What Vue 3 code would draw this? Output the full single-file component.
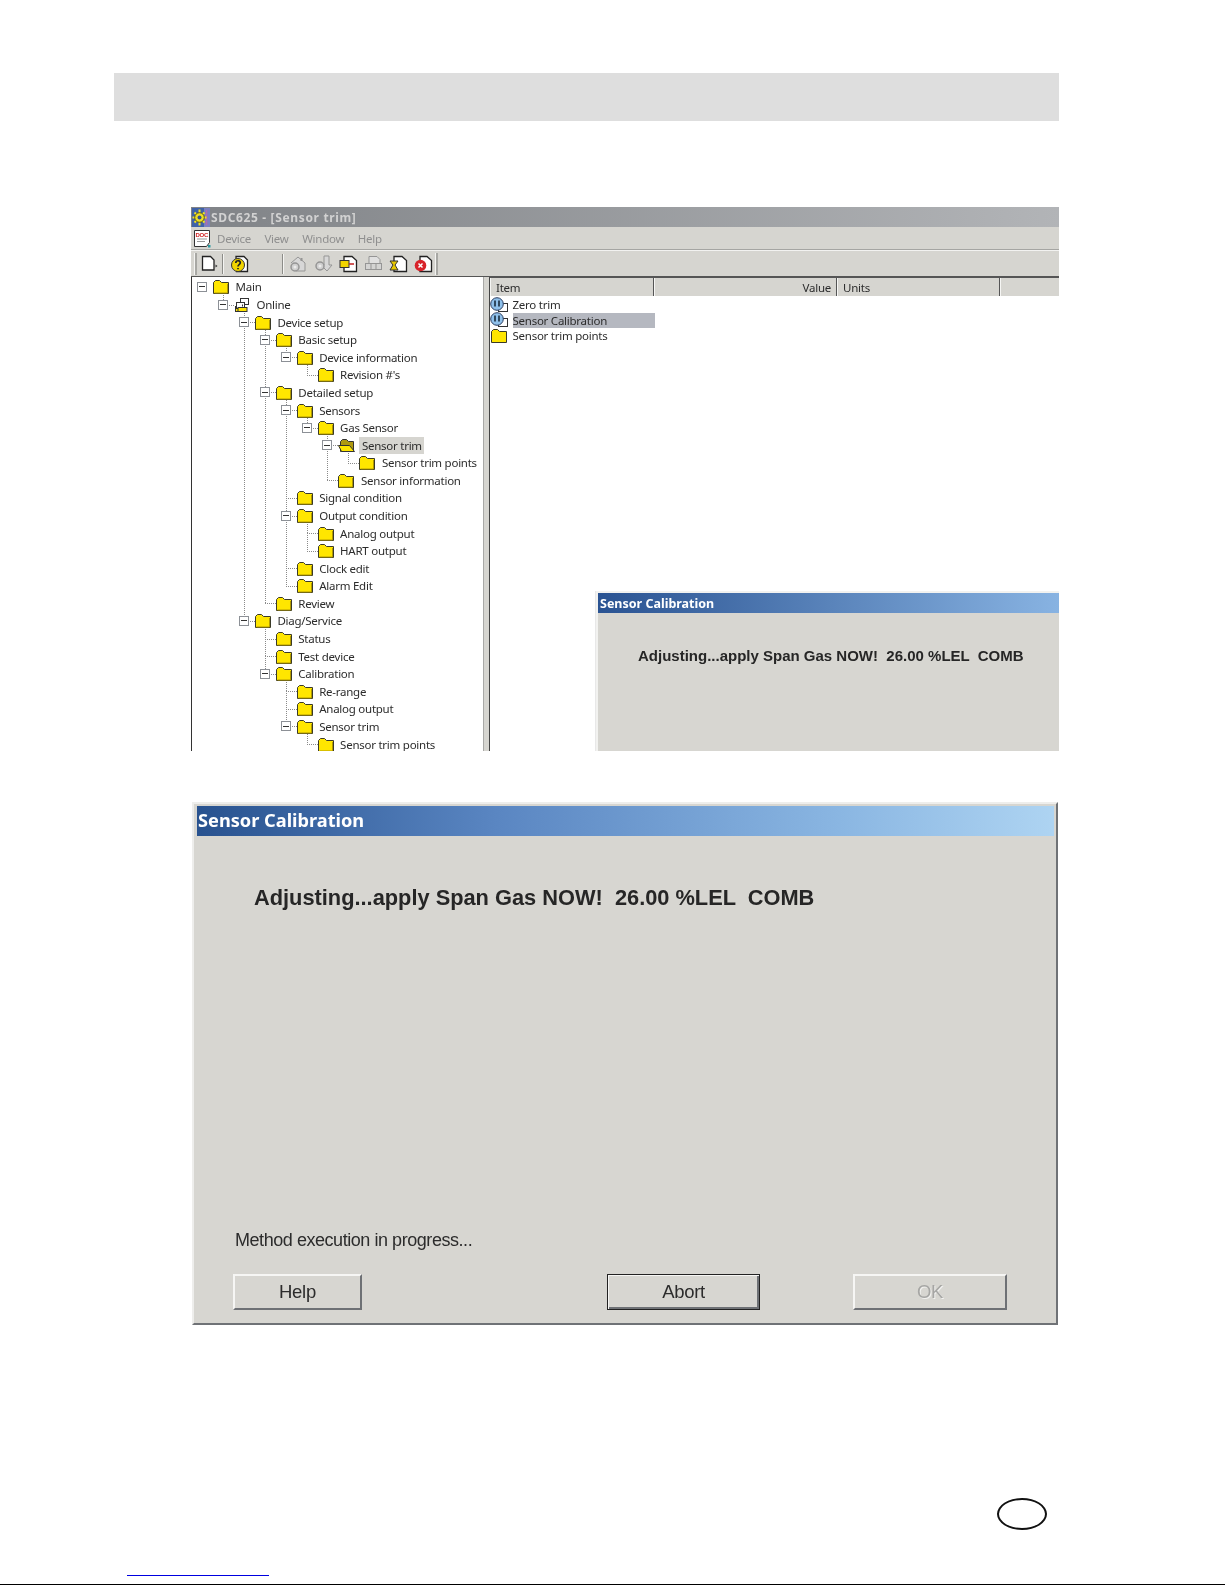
<script setup>
const treeSpec = [
  [0, 'Main', 1], [1, 'Online', 1, 'net'], [2, 'Device setup', 1], [3, 'Basic setup', 1], [4, 'Device information', 1],
  [5, "Revision #'s", 0], [3, 'Detailed setup', 1], [4, 'Sensors', 1], [5, 'Gas Sensor', 1],
  [6, 'Sensor trim', 1, 'open'], [7, 'Sensor trim points', 0], [6, 'Sensor information', 0], [4, 'Signal condition', 0],
  [4, 'Output condition', 1], [5, 'Analog output', 0], [5, 'HART output', 0], [4, 'Clock edit', 0], [4, 'Alarm Edit', 0],
  [3, 'Review', 0], [2, 'Diag/Service', 1], [3, 'Status', 0], [3, 'Test device', 0], [3, 'Calibration', 1],
  [4, 'Re-range', 0], [4, 'Analog output', 0], [4, 'Sensor trim', 1], [5, 'Sensor trim points', 0]
]
const INDENT = 20.9
const ROW = 17.58
const rows = treeSpec.map(([level, label, exp, kind], i) => ({ level, label, exp: !!exp, kind: kind || 'folder', i, pad: 5 + INDENT * level }))
const cy = (i) => Math.round(10 + ROW * i)
const cx = (l) => Math.round(10 + INDENT * l)
const lines = []
rows.forEach((r) => {
  if (r.level === 0) return
  let p = r.i - 1
  while (rows[p].level >= r.level) p--
  let start = p
  for (let q = r.i - 1; q > p; q--) {
    if (rows[q].level === r.level) { start = q; break }
  }
  lines.push({ x1: cx(r.level) + 0.5, y1: cy(start), x2: cx(r.level) + 0.5, y2: cy(r.i) })
  lines.push({ x1: cx(r.level), y1: cy(r.i) + 0.5, x2: cx(r.level) + 12, y2: cy(r.i) + 0.5 })
})
const listRows = [
  { label: 'Zero trim', icon: 'method' },
  { label: 'Sensor Calibration', icon: 'method', sel: true },
  { label: 'Sensor trim points', icon: 'folder' }
]
const menus = ['Device', 'View', 'Window', 'Help']
const message = 'Adjusting...apply Span Gas NOW!  26.00 %LEL  COMB'
</script>

<template>
  <div class="page">
    <div class="band"></div>

    <section class="app">
      <div class="titlebar">
        <svg class="appicon" width="18" height="19" viewBox="0 0 18 19">
          <rect width="18" height="19" fill="#3f62a8" />
          <rect x="12" width="6" height="19" fill="#7a7fc0" />
          <path d="M14.500 2v15" stroke="#b06ab0" stroke-width="1.500" />
          <path d="M7.500 1.500v16M.500 9.500h14M2.500 4.500l10 10M12.500 4.500l-10 10" stroke="#efe022" stroke-width="2" />
          <circle cx="7.500" cy="9.500" r="4.800" fill="#efe022" stroke="#55541c" />
          <circle cx="7.500" cy="9.500" r="2" fill="#34508e" />
        </svg>
        <span>SDC625 - [Sensor trim]</span>
      </div>
      <div class="menubar">
        <svg class="docicon" width="18" height="19" viewBox="0 0 18 19">
          <path d="M1.500 1.500h15v12l-3 4h-12z" fill="#fff" stroke="#333" />
          <text x="2.500" y="7.500" font-size="6" font-weight="700" fill="#d02020" font-family="Liberation Sans, sans-serif">DOC</text>
          <path d="M4 10h10M4 12.500h8" stroke="#999" />
          <rect x="15" y="16" width="2.500" height="2.500" fill="#2a9aa0" />
        </svg>
        <span v-for="m in menus" :key="m" class="menu">{{ m }}</span>
      </div>
      <div class="toolbar">
        <div class="tools">
          <i class="grip"></i>
          <svg width="17" height="17" viewBox="0 0 17 17" class="t1">
            <path d="M1.500 1.500h8l3.500 3.500v10h-11.500z" fill="#fff" stroke="#222" stroke-width="1.300" />
            <path d="M14.500 9.500l2 1.500-2 1.500z" fill="#333" />
          </svg>
          <i class="sep s1"></i>
          <svg width="20" height="19" viewBox="0 0 20 19" class="t2">
            <path d="M6 2.500h8l3.500 3.500v11.500h-11z" fill="#fff" stroke="#222" stroke-width="1.300" />
            <circle cx="8" cy="11" r="6.500" fill="#f2d500" stroke="#333" />
            <path d="M5.800 9c0-3 4.500-3 4.500-.2 0 1.800-2.300 1.800-2.300 3.600M8 14v1.200" fill="none" stroke="#222" stroke-width="1.700" />
          </svg>
          <i class="sep s2"></i>
          <svg width="19" height="18" viewBox="0 0 19 18" class="dis first">
            <path d="M2 8l7-6 7 6v8H7" fill="#d8d8d8" stroke="#8f8f8f" />
            <path d="M12.500 3v3" stroke="#8f8f8f" stroke-width="2" />
            <circle cx="6" cy="12" r="4" fill="#cfcfcf" stroke="#8f8f8f" stroke-width="1.500" />
            <circle cx="6" cy="12" r="1.500" fill="#eee" />
          </svg>
          <svg width="19" height="18" viewBox="0 0 19 18" class="dis">
            <path d="M10 1v9h-3l6 6 5-6h-3V1z" fill="#d8d8d8" stroke="#8f8f8f" />
            <circle cx="6" cy="11" r="4" fill="#cfcfcf" stroke="#8f8f8f" stroke-width="1.500" />
            <circle cx="6" cy="11" r="1.500" fill="#eee" />
          </svg>
          <svg width="19" height="18" viewBox="0 0 19 18">
            <path d="M5 1.500h8l4.500 4v11h-12.500z" fill="#fff" stroke="#222" stroke-width="1.300" />
            <rect x="1" y="5.500" width="9" height="7" fill="#f2d500" stroke="#333" />
            <path d="M10 9h5" stroke="#c02020" stroke-width="1.500" />
          </svg>
          <svg width="19" height="18" viewBox="0 0 19 18" class="dis">
            <path d="M5 1.500h8l3 3v6h-11z" fill="#e2e2e2" stroke="#8f8f8f" />
            <rect x="1.500" y="8.500" width="16" height="6" fill="#d4d4d4" stroke="#8f8f8f" />
            <path d="M7 8.500v6M12 8.500v6" stroke="#8f8f8f" />
          </svg>
          <svg width="19" height="18" viewBox="0 0 19 18">
            <path d="M5 1.500h8l4.500 4v11h-12.500z" fill="#fff" stroke="#222" stroke-width="1.300" />
            <path d="M1 6h8l-3 4 3 5H1l3-5z" fill="#e8c800" stroke="#333" />
          </svg>
          <svg width="19" height="18" viewBox="0 0 19 18">
            <path d="M6 1.500h7l4.500 4v11h-11.500z" fill="#fff" stroke="#222" stroke-width="1.300" />
            <circle cx="6.500" cy="10.500" r="5.800" fill="#d8232a" />
            <path d="M4.500 8.500l4 4M8.500 8.500l-4 4" stroke="#fff" stroke-width="1.500" />
          </svg>
          <i class="grip end"></i>
        </div>
      </div>

      <div class="panes">
        <div class="tree">
          <svg class="links" width="291" height="480">
            <line v-for="(l, k) in lines" :key="k" :x1="l.x1" :y1="l.y1" :x2="l.x2" :y2="l.y2" stroke="#8a8a8a" stroke-dasharray="1 1" />
          </svg>
          <div v-for="r in rows" :key="r.i" class="row" :style="{ paddingLeft: r.pad + 'px' }">
            <span class="box" :class="{ hidden: !r.exp }"><i></i></span>
            <svg v-if="r.kind === 'folder'" class="ficon" width="16" height="15" viewBox="0 0 16 15">
              <path d="M.500 3.500l2-2h4l2 2h7v11H.500z" fill="#ffe600" stroke="#3a3a28" />
              <path d="M14.500 5v9h-13" fill="none" stroke="#b29a00" />
            </svg>
            <svg v-else-if="r.kind === 'open'" class="ficon" width="17" height="15" viewBox="0 0 17 15">
              <path d="M2.500 3.500l2-2h4l2 2h5v10H2.500z" fill="#b09a10" stroke="#333" />
              <path d="M.500 7.500h11l5 6H3.500z" fill="#ffe600" stroke="#333" />
            </svg>
            <svg v-else class="ficon" width="16" height="16" viewBox="0 0 16 16">
              <rect x="6.500" y="1.500" width="8" height="6" fill="#fff" stroke="#333" />
              <rect x="1.500" y="9.500" width="9" height="5" fill="#ffe600" stroke="#333" />
              <rect x="2.500" y="5.500" width="8" height="6" fill="#fff" stroke="#333" />
              <rect x="4" y="10.500" width="9" height="4" fill="#ffe600" stroke="#333" />
              <path d="M8.500 7.500v2" stroke="#333" />
            </svg>
            <span class="label" :class="{ active: r.kind === 'open' }">{{ r.label }}</span>
          </div>
        </div>

        <div class="list">
          <div class="head">
            <div class="col c-item">Item</div>
            <div class="col c-value">Value</div>
            <div class="col c-units">Units</div>
            <div class="col c-rest"></div>
          </div>
          <div v-for="x in listRows" :key="x.label" class="lrow">
            <svg v-if="x.icon === 'method'" width="19" height="16" viewBox="0 0 19 16">
              <rect x="8.500" y="6.500" width="9" height="8" fill="#fff" stroke="#333" />
              <circle cx="7" cy="7" r="6.300" fill="#8fc0ea" stroke="#2c3e60" />
              <path d="M5 3.500v6M9 3.500v6" stroke="#123" stroke-width="1.500" />
            </svg>
            <svg v-else width="19" height="16" viewBox="0 0 19 16">
              <path d="M1.500 3.500l2-2h4l2 2h7v11h-15z" fill="#ffe600" stroke="#3a3a28" />
            </svg>
            <span class="ltext" :class="{ sel: x.sel }">{{ x.label }}</span>
          </div>
        </div>
      </div>

      <div class="mini">
        <div class="mini-title">Sensor Calibration</div>
        <div class="mini-msg">{{ message }}</div>
      </div>
    </section>

    <section class="dialog">
      <div class="dlg-title">Sensor Calibration</div>
      <div class="dlg-msg">{{ message }}</div>
      <div class="dlg-status">Method execution in progress...</div>
      <div class="dlg-buttons">
        <div class="btn b-help">Help</div>
        <div class="btn b-abort">Abort</div>
        <div class="btn b-ok">OK</div>
      </div>
    </section>

    <footer class="foot">
      <div class="oval"></div>
      <div class="rule-blue"></div>
    </footer>
  </div>
</template>

<style>
html, body { margin: 0; background: #fff; }
</style>

<style scoped>
.page { width: 1225px; height: 1585px; position: relative; overflow: hidden; background: #fff; font-family: "Liberation Sans", Arial, sans-serif; box-sizing: border-box; display: flow-root; }
.band { margin: 73px 0 0 114px; width: 945px; height: 48px; background: #dedede; }

.app { position: relative; margin: 86px 0 0 191px; width: 868px; height: 544px; overflow: hidden; background: #d6d5d0; font-family: "Noto Sans", sans-serif; font-size: 11.500px; letter-spacing: -.25px; color: #2c2c2c; filter: blur(0.3px); }
.titlebar { height: 20px; display: flex; align-items: center; gap: 1px; padding-left: 1px; background: linear-gradient(90deg, #808387, #b2b4b7); color: #d2d2d2; font-weight: 700; font-size: 12px; letter-spacing: .65px; }
.appicon { flex: none; }
.menubar { height: 22px; display: flex; align-items: center; padding-left: 2px; border-bottom: 1px solid #a5a5a2; color: #8f8f8f; }
.docicon { flex: none; margin-right: 6px; }
.menu { margin-right: 13.500px; }
.toolbar { height: 27px; box-sizing: border-box; border-top: 1px solid #f2f2f0; border-bottom: 1px solid #555; display: flex; align-items: center; }
.tools { display: flex; align-items: center; gap: 6px; padding-left: 3px; }
.grip { width: 2px; height: 22px; background: #a8a8a4; border-left: 1px solid #f4f4f2; }
.grip.end { margin-left: -4px; }
.sep { width: 1px; height: 20px; background: #8c8c88; border-right: 1px solid #f4f4f2; }
.t1 { margin-left: -2px; }
.s1 { margin-left: -2px; }
.s2 { margin-left: 25.500px; }
.first { margin-left: -1px; }
.dis { opacity: .9; }

.panes { display: flex; height: 475px; }
.tree { position: relative; width: 291px; height: 475px; flex: none; background: #fff; border-left: 1px solid #333; border-right: 1px solid #a8a8a6; padding-top: 1.210px; overflow: hidden; }
.links { position: absolute; left: 0; top: 0; }
.row { position: relative; height: 17.580px; display: flex; align-items: center; white-space: nowrap; }
.box { width: 10px; height: 10px; box-sizing: border-box; flex: none; border: 1px solid #8c9096; background: #fff; display: flex; align-items: center; justify-content: center; margin-right: 6px; }
.box i { width: 6px; height: 1px; background: #333; }
.box.hidden { visibility: hidden; }
.ficon { flex: none; }
.label { margin-left: 6.600px; }
.label.active { margin-left: 4px; padding: 0 2.500px; background: #d6d5d0; line-height: 17px; }

.list { flex: 1; margin-left: 5px; background: #fff; border-left: 1px solid #444; border-top: 1px solid #555; }
.head { height: 19px; display: flex; background: #d6d5d0; border-bottom: 1px solid #fff; box-sizing: border-box; line-height: 20px; }
.col { box-sizing: border-box; border-right: 1px solid #555; border-left: 1px solid #f6f6f4; padding: 0 5px; }
.c-item { width: 164px; }
.c-value { width: 183px; text-align: right; }
.c-units { width: 163px; }
.c-rest { flex: 1; border-right: 0; }
.lrow { height: 15.600px; display: flex; align-items: center; white-space: nowrap; }
.lrow svg { flex: none; }
.ltext { margin-left: 3.500px; height: 15.600px; line-height: 15.600px; }
.ltext.sel { width: 142px; background: #b5b8c0; }

.mini { position: absolute; left: 405px; top: 384px; right: 0; bottom: 0; background: #d7d6d1; border-top: 2px solid #f2f2f0; border-left: 2px solid #f2f2f0; box-shadow: -1px 0 0 #e8e8e8; }
.mini-title { height: 20px; line-height: 21px; padding-left: 2px; color: #fff; font-weight: 700; font-size: 12.500px; letter-spacing: 0; background: linear-gradient(90deg, #2a5392, #88b3e2); }
.mini-msg { margin: 34px 0 0 40px; font: 700 15px "Liberation Sans", sans-serif; letter-spacing: 0; white-space: pre; color: #262626; }

.dialog { box-sizing: border-box; margin: 51px 0 0 192px; width: 866px; height: 523px; background: #d7d6d1; border: 2px solid; border-color: #eeeeec #6f7276 #6f7276 #eeeeec; padding: 2px 2px 0 3px; display: flex; flex-direction: column; filter: blur(0.3px); }
.dlg-title { height: 30px; flex: none; padding-left: 1px; color: #fff; font: 700 18.200px/29px "Noto Sans", sans-serif; background: linear-gradient(90deg, #28528f, #5a86c2 35%, #8ab6e2 75%, #aed4f2); }
.dlg-msg { margin: 49px 0 0 57px; font: 700 21.800px/26px "Liberation Sans", sans-serif; white-space: pre; color: #262626; }
.dlg-status { margin: auto 0 0 38px; font: 18px/24px "Liberation Sans", sans-serif; letter-spacing: -.45px; color: #2c2c2c; }
.dlg-buttons { display: flex; margin: 22px 0 13px 36px; }
.btn { box-sizing: border-box; height: 36px; display: flex; align-items: center; justify-content: center; font: 18.500px "Liberation Sans", sans-serif; letter-spacing: -.3px; color: #2c2c2c; background: #d7d6d1; border: 2px solid; border-color: #f6f6f4 #6e7175 #6e7175 #f6f6f4; }
.b-help { width: 129px; }
.b-abort { width: 153px; margin-left: 245px; border: 1px solid #222; box-shadow: inset 1px 1px 0 #f6f6f4, inset -2px -2px 0 #6e7175; }
.b-ok { width: 154px; margin-left: 93px; color: #a6a6a4; text-shadow: 1px 1px 0 #f2f2f0; }

.foot { position: absolute; left: 0; right: 0; bottom: 0; height: 87px; border-bottom: 1px solid #000; box-sizing: border-box; }
.oval { position: absolute; left: 997px; top: 0; width: 50px; height: 32px; box-sizing: border-box; border: 2px solid #111; border-radius: 50%; }
.rule-blue { position: absolute; left: 127px; width: 142px; top: 77px; height: 1px; background: #0000e0; }
</style>
